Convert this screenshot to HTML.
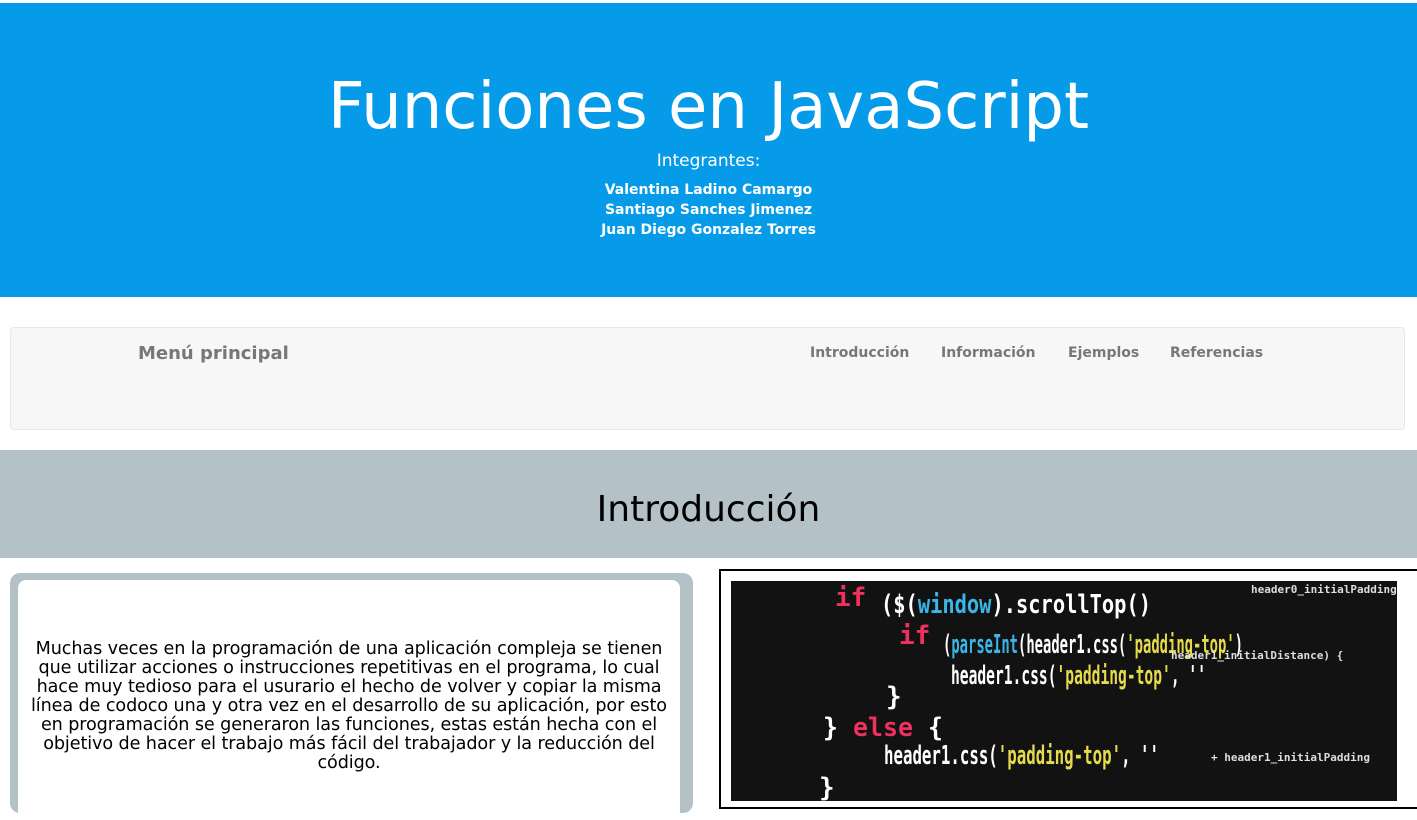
<!DOCTYPE html>
<html><head><meta charset="utf-8"><style>
*{margin:0;padding:0;box-sizing:border-box}
body{width:1417px;height:792px;overflow:hidden;background:#fff;font-family:"DejaVu Sans","Liberation Sans",sans-serif;position:relative}
.hdr{position:absolute;left:0;top:3px;width:1417px;height:294px;background:#069be9;color:#fff;text-align:center}
.hdr h1{position:absolute;top:64px;width:100%;font-weight:normal;font-size:64px;line-height:80px}
.hdr .i{position:absolute;top:148px;width:100%;font-size:17px}
.hdr .n{position:absolute;top:177px;width:100%;font-size:14px;font-weight:bold;line-height:20px}
.nav{position:absolute;left:10px;top:327px;width:1395px;height:103px;background:#f7f7f7;border:1px solid #e7e7e7;border-radius:4px;color:#777;font-weight:bold}
.nav .b{position:absolute;left:127px;top:15px;font-size:18px}
.nav a{position:absolute;top:17px;font-size:14px}
.band{position:absolute;left:0;top:450px;width:1417px;height:108px;background:#b4c2c7;text-align:center;font-size:36px;line-height:120px}
.lb{position:absolute;left:10px;top:573px;width:683px;height:240px;background:#b4c2c7;border-radius:10px}
.lw{position:absolute;left:18px;top:580px;width:662px;height:240px;background:#fff;border-radius:8px;padding-top:60px;font-size:17.6px;line-height:19px;text-align:center;color:#000;letter-spacing:-0.1px}
.rb{position:absolute;left:719px;top:569px;width:712px;height:240px;border:2px solid #000}
.img{position:absolute;left:731px;top:581px;width:666px;height:220px;background:#121212;overflow:hidden}
</style></head><body>
<div class="hdr"><h1>Funciones en JavaScript</h1><div class="i">Integrantes:</div>
<div class="n">Valentina Ladino Camargo<br>Santiago Sanches Jimenez<br>Juan Diego Gonzalez Torres</div></div>
<div class="nav"><span class="b">Menú principal</span>
<a style="left:799px">Introducción</a><a style="left:930px">Información</a><a style="left:1057px">Ejemplos</a><a style="left:1159px">Referencias</a></div>
<div class="band">Introducción</div>
<div class="lb"></div>
<div class="lw">Muchas veces en la programación de una aplicación compleja se tienen que utilizar acciones o instrucciones repetitivas en el programa, lo cual hace muy tedioso para el usurario el hecho de volver y copiar la misma línea de codoco una y otra vez en el desarrollo de su aplicación, por esto en programación se generaron las funciones, estas están hecha con el objetivo de hacer el trabajo más fácil del trabajador y la reducción del código.</div>
<div class="rb"></div>
<div class="img"><svg width="666" height="220" style="font-family:'DejaVu Sans Mono',monospace;font-weight:bold">
<g font-size="26">
<text x="104" y="25" fill="#f0305e">if</text><text x="150" y="32" fill="#fff" textLength="270" lengthAdjust="spacingAndGlyphs">($(<tspan fill="#3ab7e8">window</tspan>).scrollTop()</text>
<text x="168" y="63" fill="#f0305e">if</text><text x="212" y="72" fill="#fff" textLength="300" lengthAdjust="spacingAndGlyphs">(<tspan fill="#3ab7e8">parseInt</tspan>(header1.css(<tspan fill="#e6db4a">'padding-top'</tspan>)</text>
<text x="220" y="103" fill="#fff" textLength="255" lengthAdjust="spacingAndGlyphs">header1.css(<tspan fill="#e6db4a">'padding-top'</tspan>, ''</text>
<text x="155" y="124" fill="#fff">}</text>
<text x="92" y="155" fill="#fff" textLength="120" lengthAdjust="spacingAndGlyphs">} <tspan fill="#f0305e">else</tspan> {</text>
<text x="153" y="183" fill="#fff" textLength="275" lengthAdjust="spacingAndGlyphs">header1.css(<tspan fill="#e6db4a">'padding-top'</tspan>, ''</text>
<text x="88" y="215" fill="#fff">}</text>
</g>
<g font-size="11" fill="#ddd"><text x="440" y="78">header1_initialDistance) {</text><text x="520" y="12">header0_initialPadding</text><text x="480" y="180">+ header1_initialPadding</text></g>
</svg></div>
</body></html>
